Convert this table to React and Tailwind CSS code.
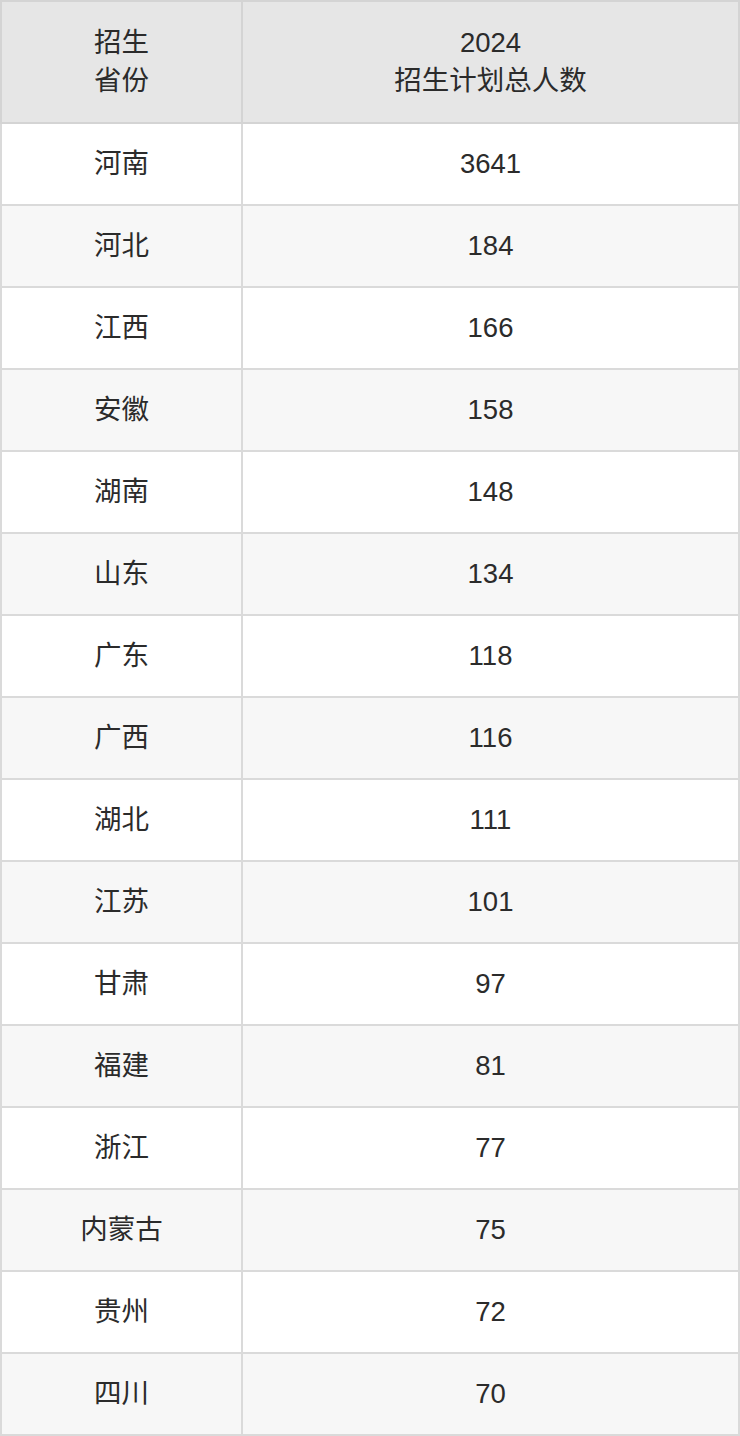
const rows = [
  ["河南", "3641"],
  ["河北", "184"],
  ["江西", "166"],
  ["安徽", "158"],
  ["湖南", "148"],
  ["山东", "134"],
  ["广东", "118"],
  ["广西", "116"],
  ["湖北", "111"],
  ["江苏", "101"],
  ["甘肃", "97"],
  ["福建", "81"],
  ["浙江", "77"],
  ["内蒙古", "75"],
  ["贵州", "72"],
  ["四川", "70"],
];

export default function App() {
  return (
    <div
      className="w-[740px] bg-white text-[#2b2b2b] text-[27.5px] leading-[38px]"
      style={{ fontFamily: '"Liberation Sans", "Noto Sans CJK SC", sans-serif' }}
    >
      <table className="w-full border-collapse table-fixed">
        <thead>
          <tr className="bg-[#e6e6e6] h-[122px]">
            <th className="w-[241px] border-2 border-[#d4d4d4] font-normal text-center">
              招生
              <br />
              省份
            </th>
            <th className="border-2 border-[#d4d4d4] font-normal text-center">
              2024
              <br />
              招生计划总人数
            </th>
          </tr>
        </thead>
        <tbody>
          {rows.map(([prov, num], i) => (
            <tr key={prov} className={i % 2 === 0 ? "h-[82px] bg-white" : "h-[82px] bg-[#f7f7f7]"}>
              <td className="border-2 border-[#dadada] text-center">{prov}</td>
              <td className="border-2 border-[#dadada] text-center">{num}</td>
            </tr>
          ))}
        </tbody>
      </table>
    </div>
  );
}
